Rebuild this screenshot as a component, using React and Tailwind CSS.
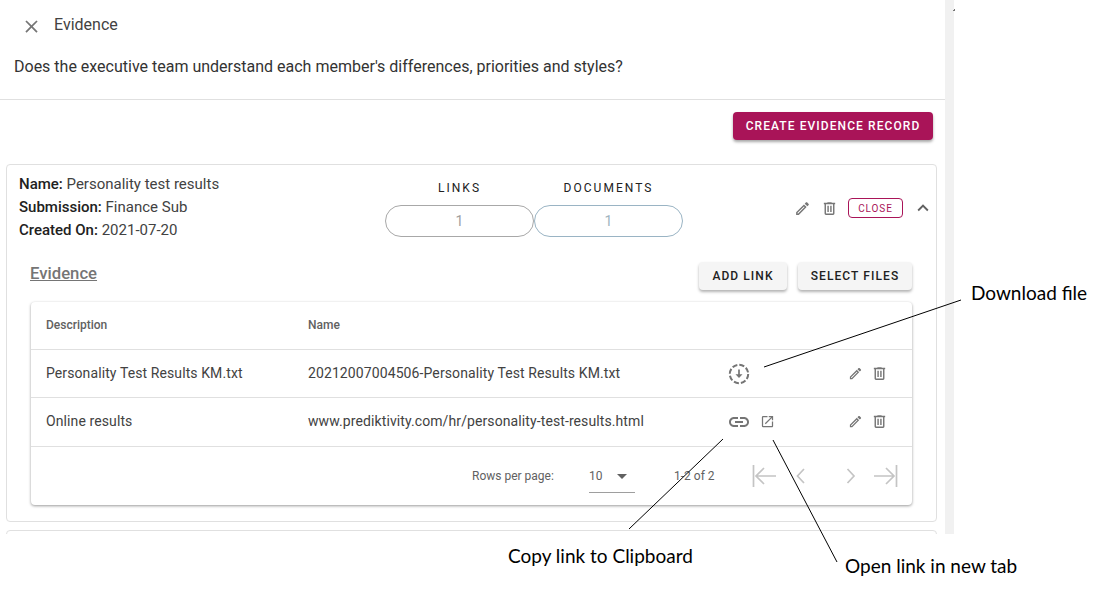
import React from "react";
import { MdKeyboardArrowUp, MdClose, MdLink, MdOpenInNew, MdArrowDropDown } from "react-icons/md";

function PencilOutline({ size, className }) {
  return (
    <svg width={size} height={size} viewBox="0 0 24 24" fill="currentColor" className={className}>
      <path d="M14.06,9L15,9.94L5.92,19H5V18.08L14.06,9M17.66,3C17.41,3 17.15,3.1 16.96,3.29L15.13,5.12L18.88,8.87L20.71,7.04C21.1,6.65 21.1,6 20.71,5.63L18.37,3.29C18.17,3.09 17.92,3 17.66,3M14.06,6.19L3,17.25V21H6.75L17.81,9.94L14.06,6.19Z" />
    </svg>
  );
}

function TrashOutline({ size, className }) {
  return (
    <svg width={size} height={size} viewBox="0 0 24 24" fill="currentColor" className={className}>
      <path d="M9,3V4H4V6H5V19A2,2 0 0,0 7,21H17A2,2 0 0,0 19,19V6H20V4H15V3H9M7,6H17V19H7V6M9,8V17H11V8H9M13,8V17H15V8H13Z" />
    </svg>
  );
}

function DashedDownload({ className }) {
  return (
    <svg width="22" height="22" viewBox="0 0 22 22" fill="none" className={className}>
      <circle cx="11" cy="11" r="9.2" stroke="currentColor" strokeWidth="2" strokeDasharray="5.2 2.03" />
      <path d="M11 6.5V12" stroke="currentColor" strokeWidth="1.7" />
      <path d="M7.5 11.2H14.5L11 15Z" fill="currentColor" />
    </svg>
  );
}

function PageIcon({ kind, className }) {
  const d = {
    first: "M1.5 1V23 M24 12H4 M12 4L4 12L12 20",
    last: "M22.5 1V23 M0 12H20 M12 4L20 12L12 20",
    prev: "M8 1L1.5 8L8 15",
    next: "M1.5 1L8 8L1.5 15",
  }[kind];
  const wide = kind === "first" || kind === "last";
  return (
    <svg width={wide ? 24 : 10} height={wide ? 24 : 16} viewBox={wide ? "0 0 24 24" : "0 0 10 16"} fill="none" stroke="currentColor" strokeWidth="1.7" className={className}>
      <path d={d} />
    </svg>
  );
}

function Row({ desc, name, height, children }) {
  return (
    <div className={`flex items-center border-b border-[#e0e0e0] text-[14px] tracking-[0.1px] text-[#424242] ${height}`}>
      <div className="w-[277px] pl-[15px]">{desc}</div>
      <div className="w-[421px]">{name}</div>
      <div className="flex w-[119px] items-center gap-[10px] text-[#757575]">{children}</div>
      <div className="flex items-center gap-2 text-[#757575]">
        <PencilOutline size={15} />
        <TrashOutline size={17} />
      </div>
    </div>
  );
}

function Pill({ label, border, color }) {
  return (
    <div className="flex w-[149px] flex-col items-center">
      <div className="mb-2 h-[17px] text-[12px] leading-[17px] tracking-[0.17em] text-[#212121]">{label}</div>
      <div className={`flex h-8 w-[149px] items-center justify-center rounded-full border text-[14px] ${border} ${color}`}>1</div>
    </div>
  );
}

export default function App() {
  return (
    <div className="relative h-[601px] w-[1112px] overflow-hidden bg-white font-['Roboto',sans-serif]">
      <div className="flex h-[534px]">
        <div className="h-full w-[945px] overflow-hidden">
          <div className="flex h-[50px] items-center pl-[21px]">
            <MdClose size={21} className="mt-[2px] text-[#757575]" />
            <span className="ml-3 text-[16px] text-[#424242]">Evidence</span>
          </div>
          <div className="h-[50px] border-b border-[#e0e0e0] pl-[14px] pt-[7px] text-[16px] leading-[20px] text-[#333333]">
            Does the executive team understand each member's differences, priorities and styles?
          </div>
          <div className="flex justify-end pr-3 pt-3">
            <button className="h-7 w-[200px] rounded bg-[#a91458] text-[12px] font-medium tracking-[0.09em] text-white shadow-[0_2px_3px_rgba(0,0,0,0.35)]">
              CREATE EVIDENCE RECORD
            </button>
          </div>
          <div className="ml-[6px] mt-6 h-[358px] w-[931px] rounded border border-[#e0e0e0] px-3">
            <div className="flex h-[86px]">
              <div className="w-[366px] shrink-0 pt-2 text-[15px] leading-[23px] text-[#424242]">
                <div><b className="font-medium text-[#212121]">Name:</b> Personality test results</div>
                <div><b className="font-medium text-[#212121]">Submission:</b> Finance Sub</div>
                <div><b className="font-medium text-[#212121]">Created On:</b> 2021-07-20</div>
              </div>
              <div className="flex pt-[15px]">
                <Pill label="LINKS" border="border-[#a8a8a8]" color="text-[#a0a0a0]" />
                <Pill label="DOCUMENTS" border="border-[#9ab4c4]" color="text-[#a0b4c0]" />
              </div>
              <div className="ml-[111px] flex items-center text-[#757575]">
                <PencilOutline size={17} />
                <TrashOutline size={17} className="ml-[10px]" />
                <div className="ml-[10px] flex h-5 w-[55px] items-center justify-center rounded border border-[#a91458] text-[10px] tracking-[0.09em] text-[#a91458]">CLOSE</div>
                <MdKeyboardArrowUp size={22} className="ml-[9px] text-[#616161]" />
              </div>
            </div>
            <div className="flex h-[51px] items-start pl-[11px]">
              <span className="mt-[10px] text-[16.7px] font-medium text-[#757575] underline">Evidence</span>
              <div className="ml-auto mt-[11px] flex gap-[11px] pr-3 text-[12px] font-medium tracking-[0.09em] text-[#212121]">
                <button className="h-7 w-[88px] rounded bg-[#f5f5f5] shadow-[0_2px_3px_rgba(0,0,0,0.3)]">ADD LINK</button>
                <button className="h-7 w-[114px] rounded bg-[#f5f5f5] shadow-[0_2px_3px_rgba(0,0,0,0.3)]">SELECT FILES</button>
              </div>
            </div>
            <div className="ml-3 w-[881px] rounded bg-white shadow-[0_1px_3px_rgba(0,0,0,0.4)]">
              <div className="flex h-12 items-center border-b border-[#e0e0e0] pb-[2px] text-[12px] font-medium text-[#616161]">
                <div className="w-[277px] pl-[15px]">Description</div>
                <div>Name</div>
              </div>
              <Row height="h-12" desc="Personality Test Results KM.txt" name="20212007004506-Personality Test Results KM.txt">
                <DashedDownload className="-ml-[1px]" />
              </Row>
              <Row height="h-[49px] pb-[1px]" desc="Online results" name="www.prediktivity.com/hr/personality-test-results.html">
                <MdLink size={24} className="-ml-[2px]" />
                <MdOpenInNew size={15} className="-ml-[1px]" />
              </Row>
              <div className="flex h-[58px] items-center text-[12px] text-[#616161]">
                <span className="ml-[441px] w-[117px]">Rows per page:</span>
                <div className="flex h-[34px] w-[46px] items-center border-b border-[#9e9e9e]">
                  <span>10</span>
                  <MdArrowDropDown size={24} className="ml-[7px]" />
                </div>
                <span className="ml-[39px] w-[41px]">1-2 of 2</span>
                <div className="flex items-center text-[#c4c4c4]">
                  <PageIcon kind="first" className="ml-[37px]" />
                  <PageIcon kind="prev" className="ml-5" />
                  <PageIcon kind="next" className="ml-10" />
                  <PageIcon kind="last" className="ml-[18px]" />
                </div>
              </div>
            </div>
          </div>
          <div className="ml-[6px] mt-2 h-10 w-[931px] rounded border border-[#e0e0e0]" />
        </div>
        <div className="h-full w-[9px] bg-[#f1f1f1]" />
      </div>

      <svg className="absolute left-0 top-0" width="1112" height="601" fill="none" stroke="#000" strokeWidth="1">
        <path d="M764 367 L961 300" />
        <path d="M723 439 L629 529" />
        <path d="M773 440 L837 562" />
        <path d="M953 10.5 h2 M954 9.5 h1" stroke="#777" />
      </svg>
      <span className="absolute left-[971px] top-[282px] font-['Lato',sans-serif] text-[19px] leading-[22px] text-black">Download file</span>
      <span className="absolute left-[508px] top-[545px] font-['Lato',sans-serif] text-[19px] leading-[22px] text-black">Copy link to Clipboard</span>
      <span className="absolute left-[845px] top-[555px] font-['Lato',sans-serif] text-[19px] leading-[22px] text-black">Open link in new tab</span>
    </div>
  );
}
